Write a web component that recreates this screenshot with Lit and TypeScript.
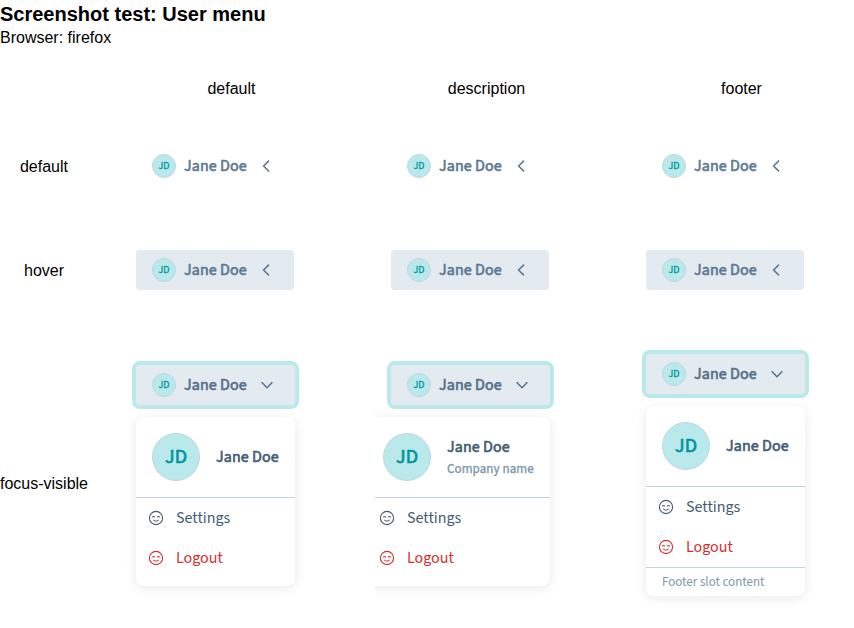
import { LitElement, html, css, svg, nothing } from "lit";
import { customElement, property } from "lit/decorators.js";
import { classMap } from "lit/directives/class-map.js";

const chevronLeft = svg`<path d="M10 2.6 4.6 8l5.4 5.4" />`;
const chevronDown = svg`<path d="M2.6 5.2 8 10.7l5.4-5.5" />`;

@customElement("user-menu")
class UserMenu extends LitElement {
  @property() name = "Jane Doe";
  @property() initials = "JD";
  @property() description = "";
  @property() footer = "";
  @property() mode = "default";

  static styles = css`
    :host {
      display: block;
      width: 158px;
      font-family: "Source Sans 3", "Noto Sans CJK SC", "Noto Sans", sans-serif;
      font-size: 16px;
      color: #435c72;
    }
    :host([mode="focus-visible"]) { width: 159px; }
    .button {
      box-sizing: border-box;
      height: 40px;
      display: flex;
      align-items: center;
      gap: 8px;
      padding: 0 16px;
      border-radius: 4px;
      color: #5c7991;
    }
    .hover { background: #e3eaf0; }
    .open {
      background: #e3eaf0;
      outline: 4px solid #b9e9ea;
      color: #55708a;
    }
    .label, .name {
      -webkit-text-stroke: 0.6px currentColor;
      letter-spacing: 0.1px;
      line-height: 20px;
      white-space: nowrap;
    }
    .label { width: 63px; }
    .avatar {
      box-sizing: border-box;
      flex: none;
      width: 24px;
      height: 24px;
      display: flex;
      align-items: center;
      justify-content: center;
      border: 1px solid #c3d6e0;
      border-radius: 50%;
      background: #b9e9ea;
      color: #00959d;
      font-size: 10px;
      -webkit-text-stroke: 0.3px currentColor;
      line-height: 1;
    }
    .large { width: 48px; height: 48px; font-size: 20px; -webkit-text-stroke-width: 0.7px; letter-spacing: 0.1px; }
    svg { display: block; flex: none; fill: none; stroke: currentColor; }
    .chevron { width: 16px; height: 16px; margin-left: 4px; stroke-width: 1.5; }
    .menu {
      box-sizing: border-box;
      margin-top: 12px;
      width: 159px;
      border-radius: 8px;
      background: #fff;
      box-shadow: 0 2px 12px rgba(0, 0, 0, 0.09);
    }
    .wide { width: 183px; margin-left: -24px; }
    .head {
      height: 80px;
      display: flex;
      align-items: center;
      gap: 16px;
      padding: 0 16px;
      border-bottom: 1px solid #c3d3de;
    }
    .wide .name { padding-top: 2px; }
    .description {
      margin-top: 3px;
      color: #7c99b0;
      font-size: 13px;
      -webkit-text-stroke: 0.35px currentColor;
      letter-spacing: 0.1px;
      line-height: 18px;
      white-space: nowrap;
    }
    .items { padding-bottom: 8px; }
    .flush { padding-bottom: 0; }
    .item {
      height: 40px;
      display: flex;
      align-items: center;
      gap: 12px;
      padding: 0 12px;
      line-height: 20px;
    }
    .danger { color: #d32f2f; }
    .icon { width: 16px; height: 16px; stroke-width: 1.1; stroke-linecap: round; }
    .footer {
      height: 28px;
      border-top: 1px solid #c3d3de;
      padding: 0 16px;
      color: #7c99b0;
      font-size: 13px;
      line-height: 28px;
      white-space: nowrap;
    }
  `;

  private item(label: string, danger = false) {
    return html`<div class=${classMap({ item: true, danger })}>
      <svg class="icon" viewBox="0 0 16 16">
        <circle cx="8" cy="8" r="6.6" />
        <path d="M4.4 7q1-1.1 2.1 0M9.5 7q1.1-1.1 2.1 0M5.7 10.2q2.3 2 4.6 0" />
      </svg>
      <span>${label}</span>
    </div>`;
  }

  render() {
    const open = this.mode === "focus-visible";
    return html`
      <div class=${classMap({ button: true, hover: this.mode === "hover", open })}>
        <div class="avatar">${this.initials}</div>
        <span class="label">${this.name}</span>
        <svg class="chevron" viewBox="0 0 16 16">${open ? chevronDown : chevronLeft}</svg>
      </div>
      ${open
        ? html`<div class=${classMap({ menu: true, wide: !!this.description })}>
            <div class="head">
              <div class="avatar large">${this.initials}</div>
              <div>
                <div class="name">${this.name}</div>
                ${this.description ? html`<div class="description">${this.description}</div>` : nothing}
              </div>
            </div>
            <div class=${classMap({ items: true, flush: !!this.footer })}>
              ${this.item("Settings")} ${this.item("Logout", true)}
            </div>
            ${this.footer ? html`<div class="footer">${this.footer}</div>` : nothing}
          </div>`
        : nothing}
    `;
  }
}

@customElement("app-root")
class AppRoot extends LitElement {
  static styles = css`
    :host {
      display: block;
      height: 628px;
      overflow: hidden;
      background: #fff;
      color: #000;
      font: 16px/18px "Liberation Sans", Arial, sans-serif;
    }
    .title { margin: 0; padding-top: 3px; font-size: 20px; line-height: 23px; font-weight: 700; }
    .browser { margin: 0; padding-top: 3px; height: 21px; }
    .grid {
      display: grid;
      grid-template-columns: 88px repeat(3, 223px);
      grid-template-rows: 76px 80px 128px 282.8px;
      column-gap: 32px;
    }
    .heading {
      display: flex;
      align-items: center;
      justify-content: center;
      padding-top: 2px;
      white-space: nowrap;
    }
    .lower { padding-top: 17px; }
    .cell { display: flex; align-items: center; padding: 0 16px; overflow: hidden; }
  `;

  render() {
    const columns = ["default", "description", "footer"];
    const rows = ["default", "hover", "focus-visible"];
    return html`
      <h1 class="title">Screenshot test: User menu</h1>
      <p class="browser">Browser: firefox</p>
      <div class="grid">
        <div></div>
        ${columns.map((c) => html`<div class="heading">${c}</div>`)}
        ${rows.map(
          (r) => html`
            <div class=${classMap({ heading: true, lower: r === "focus-visible" })}>${r}</div>
            ${columns.map(
              (c) => html`<div class="cell">
                <user-menu
                  mode=${r}
                  .description=${c === "description" ? "Company name" : ""}
                  .footer=${c === "footer" ? "Footer slot content" : ""}
                ></user-menu>
              </div>`,
            )}
          `,
        )}
      </div>
    `;
  }
}
